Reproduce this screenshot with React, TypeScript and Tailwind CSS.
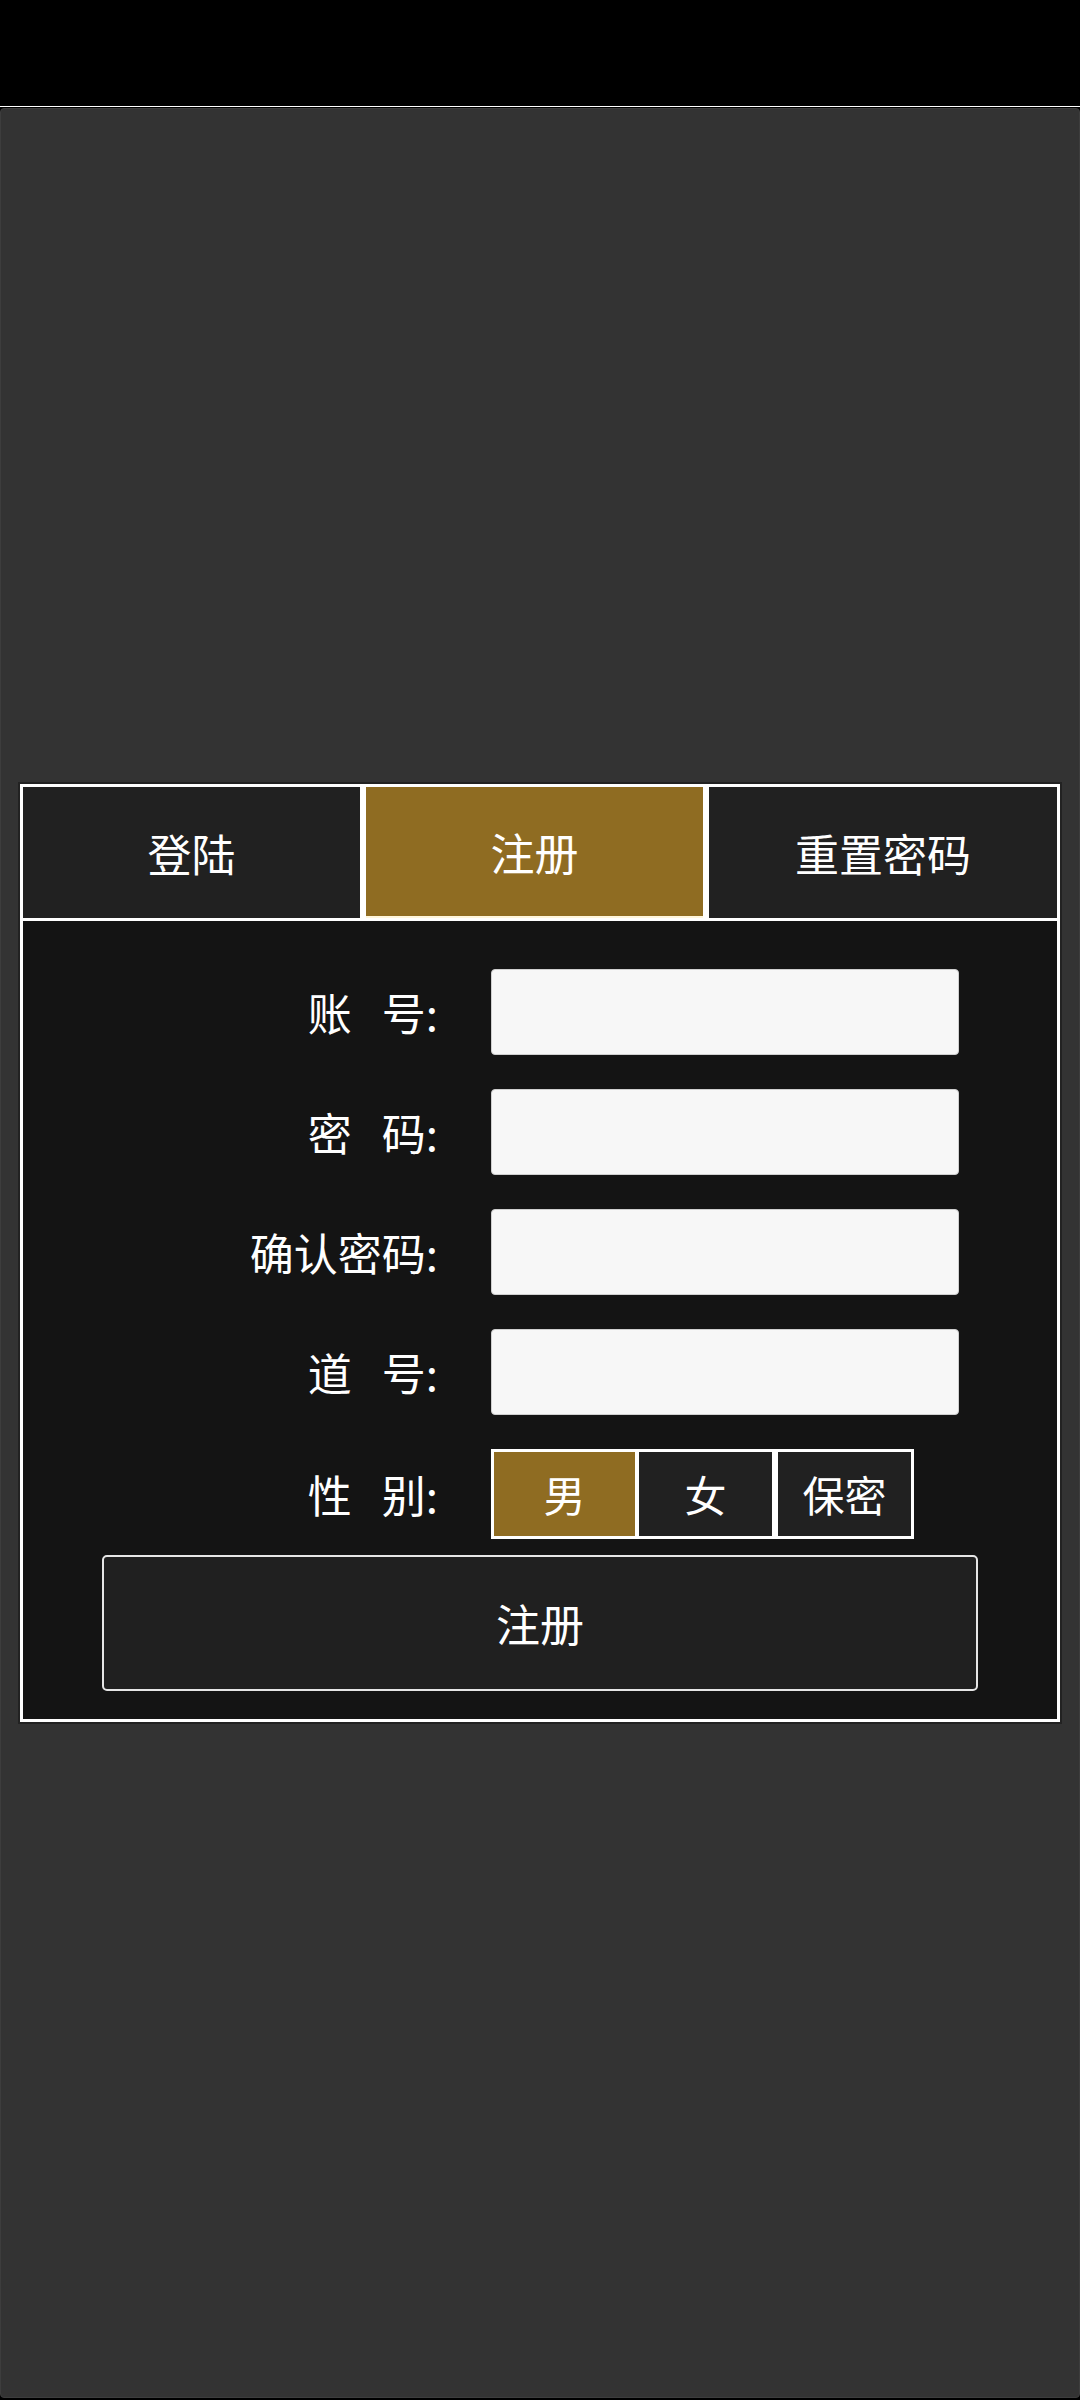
import React from "react";

const font = { fontFamily: '"Noto Sans CJK SC", "Noto Sans", sans-serif' };

const Label = ({ chars }: { chars: string[] }) => {
  return (
    <div className="w-[415px] flex justify-end items-center text-[44px] leading-none text-white">
      {chars.length === 2 ? (
        <>
          <span>{chars[0]}</span>
          <span className="inline-block w-[30px]" />
          <span>{chars[1]}:</span>
        </>
      ) : (
        <span>{chars.join("")}:</span>
      )}
    </div>
  );
};

const InputRow = ({ chars }: { chars: string[] }) => {
  return (
    <div className="flex items-center gap-[53px]">
      <Label chars={chars} />
      <div className="w-[468px] h-[86px] bg-[#f7f7f7] border border-[#cfcfcf] rounded-[4px]"></div>
    </div>
  );
};

const App = () => {
  return (
    <div className="w-[1080px] h-[2400px] bg-black" style={font}>
      <div className="h-[107px] bg-black border-b border-white"></div>
      <div className="mt-[1px] h-[2290px] bg-[#333333] border border-[#3d3d3d] rounded-[4px] flex flex-col justify-center">
        <div className="mx-[19px] shadow-[0_0_0_2px_#222222]">
          {/* tabs */}
          <div className="flex bg-white pt-[3px] px-[3px] gap-[6px] text-white text-[44px] leading-none">
            <div className="w-[337px] h-[131px] bg-[#212121] flex items-center justify-center">登陆</div>
            <div className="w-[337px] h-[131px] bg-[#8f6c22] border-b-2 border-[#fff6dc] flex items-center justify-center">注册</div>
            <div className="flex-1 h-[131px] bg-[#212121] flex items-center justify-center">重置密码</div>
          </div>
          {/* form */}
          <div className="bg-[#141414] border-[3px] border-white pt-[48px] pb-[28px]">
            <div className="flex flex-col gap-[34px]">
              <InputRow chars={["账", "号"]} />
              <InputRow chars={["密", "码"]} />
              <InputRow chars={["确", "认", "密", "码"]} />
              <InputRow chars={["道", "号"]} />
              <div className="flex items-center gap-[53px]">
                <Label chars={["性", "别"]} />
                <div className="flex bg-white p-[3px] text-white text-[42px] leading-none">
                  <div className="w-[141px] h-[84px] bg-[#8f6c22] flex items-center justify-center">男</div>
                  <div className="ml-[4px] w-[133px] h-[84px] bg-[#212121] flex items-center justify-center">女</div>
                  <div className="ml-[6px] w-[133px] h-[84px] bg-[#212121] flex items-center justify-center">保密</div>
                </div>
              </div>
            </div>
            <div className="mt-[16px] mx-auto w-[876px] h-[136px] bg-[#202020] border-2 border-[#e6e6e6] rounded-[5px] flex items-center justify-center text-white text-[44px] leading-none">
              注册
            </div>
          </div>
        </div>
      </div>
    </div>
  );
};

export default App;
